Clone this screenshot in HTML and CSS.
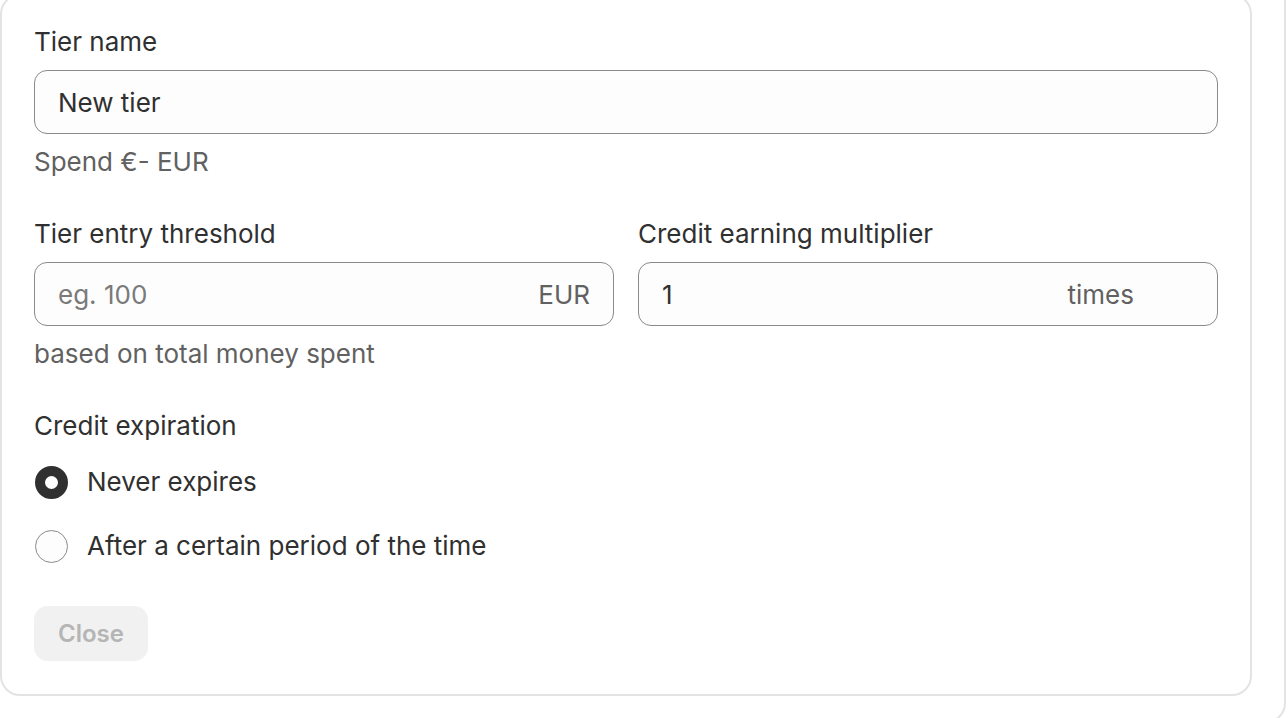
FILE: index.html
```html
<!DOCTYPE html>
<html lang="en">
<head>
<meta charset="utf-8">
<title>Tier</title>
<link rel="stylesheet" href="styles.css">
</head>
<body>
<div class="outer">
  <div class="card">
    <div class="field">
      <label class="label">Tier name</label>
      <div class="input"><span class="value">New tier</span></div>
      <div class="help">Spend €- EUR</div>
    </div>

    <div class="row">
      <div class="field">
        <label class="label">Tier entry threshold</label>
        <div class="input"><span class="placeholder">eg. 100</span><span class="suffix">EUR</span></div>
        <div class="help">based on total money spent</div>
      </div>
      <div class="field">
        <label class="label">Credit earning multiplier</label>
        <div class="input"><span class="value">1</span><span class="suffix suffix-times">times</span></div>
      </div>
    </div>

    <div class="field">
      <div class="label">Credit expiration</div>
      <div class="radios">
        <div class="radio-row"><span class="radio checked"></span><span class="radio-text">Never expires</span></div>
        <div class="radio-row"><span class="radio"></span><span class="radio-text">After a certain period of the time</span></div>
      </div>
    </div>

    <div class="actions">
      <button class="btn" disabled>Close</button>
    </div>
  </div>
</div>
</body>
</html>
```

FILE: styles.css
```css
* { box-sizing: border-box; }
html, body { margin: 0; padding: 0; background: #ffffff; overflow: hidden; }
body {
  font-family: Inter, "Noto Sans", sans-serif;
  font-size: 26px;
  color: #303030;
  width: 1288px;
  height: 718px;
}
.outer {
  margin: -32px 0 0 -34px;
  width: 1320px;
  border: 2px solid #e3e3e3;
  border-radius: 20px;
  padding: 24px 32px 25px 32px;
}
.card {
  border: 2px solid #e3e3e3;
  border-radius: 20px;
  background: #fff;
  padding: 28px 32px 33px 32px;
  display: flex;
  flex-direction: column;
}
.field { display: flex; flex-direction: column; }
.label {
  line-height: 36px;
  height: 36px;
  color: #303030;
}
.input {
  margin-top: 10px;
  height: 64px;
  border: 1px solid #8a8a8a;
  border-radius: 13px;
  background: #fdfdfd;
  padding: 0 23px;
  display: flex;
  align-items: center;
  justify-content: space-between;
}
.value { color: #303030; }
.placeholder { color: #7a7a7a; }
.suffix { color: #616161; }
.suffix-times { margin-right: 60px; }
.help {
  margin-top: 10px;
  line-height: 36px;
  color: #616161;
}
.row {
  margin-top: 36px;
  display: grid;
  grid-template-columns: 1fr 1fr;
  gap: 24px;
  align-items: start;
}
.row + .field { margin-top: 36px; }
.radios {
  margin-top: 20px;
  display: flex;
  flex-direction: column;
  gap: 28px;
}
.radio-row {
  display: flex;
  align-items: center;
  height: 36px;
  gap: 19px;
}
.radio {
  width: 33px;
  height: 33px;
  margin-left: 1px;
  border-radius: 50%;
  border: 1px solid #8a8a8a;
  background: #fdfdfd;
  flex: none;
}
.radio.checked {
  border: 10.5px solid #303030;
  background: #ffffff;
}
.radio-text { line-height: 36px; color: #303030; }
.actions { margin-top: 42px; display: flex; }
.btn {
  font-family: Inter, "Noto Sans", sans-serif;
  font-size: 24px;
  font-weight: 600;
  color: #b5b5b5;
  background: #f1f1f1;
  border: none;
  border-radius: 14px;
  width: 114px;
  height: 55px;
  padding: 0;
}
```
